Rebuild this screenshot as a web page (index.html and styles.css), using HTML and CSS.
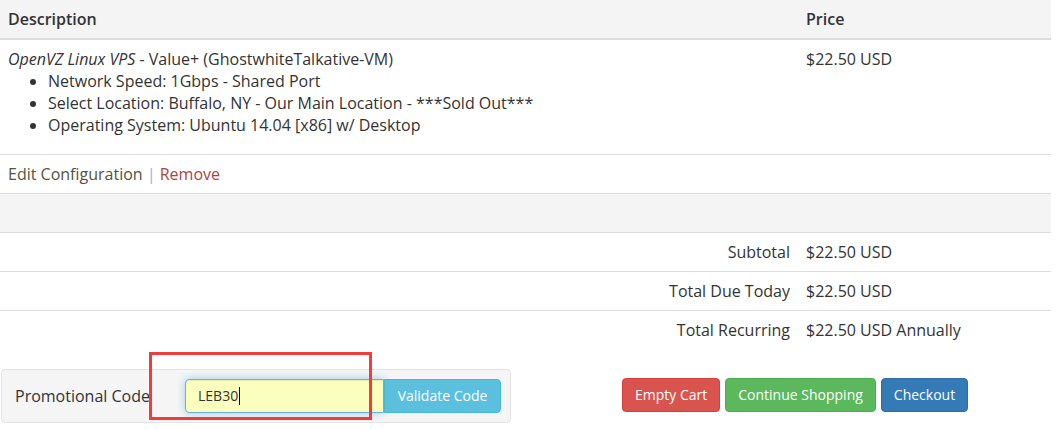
FILE: index.html
```html
<!DOCTYPE html>
<html lang="en">
<head>
  <meta charset="UTF-8">
  <meta name="viewport" content="width=device-width, initial-scale=1.0">
  <title>Shopping Cart</title>
  <link rel="stylesheet" href="styles.css">
</head>
<body>
  <div class="cart">
    <table class="cart-table">
      <thead>
        <tr>
          <th class="col-desc">Description</th>
          <th class="col-price">Price</th>
        </tr>
      </thead>
      <tbody>
        <tr>
          <td>
            <em>OpenVZ Linux VPS</em> - Value+ (GhostwhiteTalkative-VM)
            <ul class="options">
              <li>Network Speed: 1Gbps - Shared Port</li>
              <li>Select Location: Buffalo, NY - Our Main Location - ***Sold Out***</li>
              <li>Operating System: Ubuntu 14.04 [x86] w/ Desktop</li>
            </ul>
          </td>
          <td>$22.50 USD</td>
        </tr>
        <tr>
          <td colspan="2">
            <a class="edit-link" href="#">Edit Configuration</a> <span class="sep">|</span> <a class="remove-link" href="#">Remove</a>
          </td>
        </tr>
        <tr class="spacer">
          <td colspan="2">&nbsp;</td>
        </tr>
        <tr>
          <td class="label">Subtotal</td>
          <td>$22.50 USD</td>
        </tr>
        <tr>
          <td class="label">Total Due Today</td>
          <td>$22.50 USD</td>
        </tr>
        <tr>
          <td class="label">Total Recurring</td>
          <td>$22.50 USD Annually</td>
        </tr>
      </tbody>
    </table>

    <div class="cart-bottom">
      <form class="promo">
        <label class="promo-label" for="promocode">Promotional Code</label>
        <div class="promo-field">LEB30<span class="caret"></span></div>
        <button type="button" class="btn btn-info promo-btn">Validate Code</button>
        <!-- red annotation box from the screenshot -->
        <div class="highlight"></div>
      </form>

      <div class="actions">
        <button type="button" class="btn btn-danger">Empty Cart</button>
        <button type="button" class="btn btn-success">Continue Shopping</button>
        <button type="button" class="btn btn-primary">Checkout</button>
      </div>
    </div>
  </div>
</body>
</html>
```

FILE: styles.css
```css
body {
  font-family: 'Open Sans', 'Noto Sans', sans-serif;
  font-size: 16px;
  line-height: 22px;
  color: #333;
  margin: 0;
  background: #fff;
}

.cart {
  width: 1051px;
}

.cart-table {
  width: 100%;
  border-collapse: collapse;
  margin-bottom: 20px;
}

.cart-table th,
.cart-table td {
  padding: 8px;
  text-align: left;
  vertical-align: top;
  border-top: 1px solid #ddd;
}

.cart-table thead th {
  background-color: #f4f4f4;
  font-weight: 600;
  border-top: 0;
  border-bottom: 2px solid #ddd;
}

.col-price {
  width: 237px;
}

.cart-table td.label {
  text-align: right;
}

.options {
  margin: 0 0 10px;
  padding-left: 40px;
}

.edit-link {
  color: #545440;
  text-decoration: none;
}

.sep {
  color: #7fbbe6;
}

.remove-link {
  color: #a94442;
  text-decoration: none;
}

.spacer td {
  background-color: #f4f4f4;
}

.cart-bottom {
  display: flex;
  align-items: center;
}

.promo {
  position: relative;
  display: flex;
  align-items: center;
  width: 491px;
  margin: 0 0 0 1px;
  padding: 9px 4px 9px 13px;
  background-color: #f5f5f5;
  border: 1px solid #e3e3e3;
  border-radius: 4px;
}

.promo-label {
  flex: 0 0 170px;
}

.promo-field {
  box-sizing: border-box;
  width: 199px;
  height: 34px;
  padding: 6px 12px;
  font-size: 14px;
  line-height: 20px;
  color: #333;
  background-color: #faffbd;
  border: 1px solid #66afe9;
  border-radius: 4px 0 0 4px;
  box-shadow: inset 0 1px 1px rgba(0, 0, 0, 0.075), 0 0 8px rgba(102, 175, 233, 0.6);
}

.caret {
  display: inline-block;
  width: 1px;
  height: 18px;
  margin-left: 1px;
  vertical-align: -4px;
  background-color: #000;
}

.btn {
  box-sizing: border-box;
  height: 34px;
  padding: 6px 12px;
  font-family: inherit;
  font-size: 14px;
  line-height: 20px;
  color: #fff;
  border: 1px solid transparent;
  border-radius: 4px;
  cursor: pointer;
}

.promo-btn {
  width: 117px;
  border-radius: 0 4px 4px 0;
}

.btn-info {
  background-color: #5bc0de;
  border-color: #46b8da;
}

.btn-danger {
  background-color: #d9534f;
  border-color: #d43f3a;
}

.btn-success {
  background-color: #5cb85c;
  border-color: #4cae4c;
}

.btn-primary {
  background-color: #337ab7;
  border-color: #2e6da4;
}

.highlight {
  position: absolute;
  left: 147px;
  top: -18px;
  width: 217px;
  height: 62px;
  border: 3px solid #f23b3b;
  pointer-events: none;
}

.actions {
  display: flex;
  gap: 5px;
  margin-left: 111px;
  margin-top: -3px;
}
```
